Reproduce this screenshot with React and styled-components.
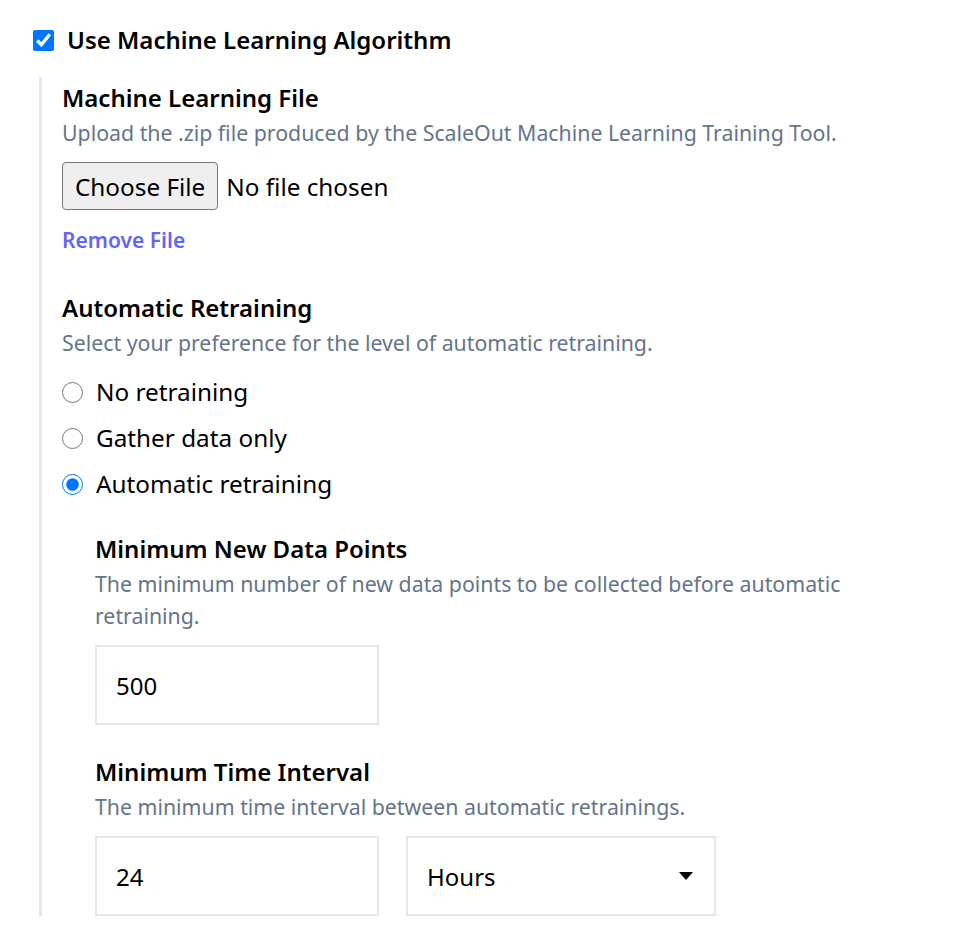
import React, { useState } from "react";
import styled, { createGlobalStyle } from "styled-components";

const GlobalStyle = createGlobalStyle`
  body {
    margin: 0;
    background: #ffffff;
    font-family: "Noto Sans", "Open Sans", sans-serif;
    color: #000000;
  }
`;

const retrainingOptions = [
  { value: "none", label: "No retraining" },
  { value: "gather", label: "Gather data only" },
  { value: "auto", label: "Automatic retraining" },
];

export default function App() {
  const [useMl, setUseMl] = useState(true);
  const [retraining, setRetraining] = useState("auto");
  const [points, setPoints] = useState("500");
  const [interval, setInterval] = useState("24");
  const [unit, setUnit] = useState("hours");

  return (
    <Page>
      <GlobalStyle />
      <CheckRow>
        <CheckBox
          type="checkbox"
          checked={useMl}
          onChange={(e) => setUseMl(e.target.checked)}
        />
        <CheckLabel>Use Machine Learning Algorithm</CheckLabel>
      </CheckRow>

      <Settings>
        <Title>Machine Learning File</Title>
        <Description>
          Upload the .zip file produced by the ScaleOut Machine Learning
          Training Tool.
        </Description>
        <FileInput type="file" accept=".zip" />
        <LinkButton type="button">Remove File</LinkButton>

        <Title $top={34}>Automatic Retraining</Title>
        <Description>
          Select your preference for the level of automatic retraining.
        </Description>
        <RadioGroup>
          {retrainingOptions.map((opt) => (
            <RadioRow key={opt.value}>
              <Radio
                type="radio"
                name="retraining"
                value={opt.value}
                checked={retraining === opt.value}
                onChange={() => setRetraining(opt.value)}
              />
              {opt.label}
            </RadioRow>
          ))}
        </RadioGroup>

        <Nested>
          <Title $top={29}>Minimum New Data Points</Title>
          <Description>
            The minimum number of new data points to be collected before
            automatic retraining.
          </Description>
          <FieldRow>
            <TextField
              value={points}
              onChange={(e) => setPoints(e.target.value)}
            />
          </FieldRow>

          <Title $top={29}>Minimum Time Interval</Title>
          <Description>
            The minimum time interval between automatic retrainings.
          </Description>
          <FieldRow>
            <TextField
              value={interval}
              onChange={(e) => setInterval(e.target.value)}
            />
            <SelectWrap>
              <Select value={unit} onChange={(e) => setUnit(e.target.value)}>
                <option value="minutes">Minutes</option>
                <option value="hours">Hours</option>
                <option value="days">Days</option>
              </Select>
            </SelectWrap>
          </FieldRow>
        </Nested>
      </Settings>
    </Page>
  );
}

const Page = styled.div`
  padding: 24px 0 36px 33px;
  width: 850px;
`;

const CheckRow = styled.label`
  display: flex;
  align-items: center;
  gap: 13px;
  height: 32px;
`;

const CheckBox = styled.input`
  width: 21px;
  height: 21px;
  margin: 0;
  accent-color: #0075ff;
`;

const CheckLabel = styled.span`
  font-size: 24px;
  font-weight: 600;
  line-height: 32px;
`;

const Settings = styled.div`
  margin: 21px 0 0 6px;
  padding: 3px 0 0 20px;
  border-left: 3px solid #e5e7eb;
  display: flex;
  flex-direction: column;
  align-items: flex-start;
`;

const Title = styled.h3`
  margin: ${(p) => p.$top || 0}px 0 0;
  font-size: 24px;
  font-weight: 600;
  line-height: 36px;
`;

const Description = styled.p`
  margin: 1px 0 0;
  font-size: 21.3px;
  line-height: 32px;
  color: #64748b;
`;

const FileInput = styled.input`
  margin-top: 13px;
  font-family: inherit;
  font-size: 24.3px;
  line-height: 32px;
  color: #000;

  &::file-selector-button {
    height: 48px;
    margin: 0 8px 0 0;
    padding: 0 12px;
    font-family: inherit;
    font-size: 24.3px;
    color: #000;
    background: #efefef;
    border: 1px solid #767676;
    border-radius: 4px;
  }
`;

const LinkButton = styled.button`
  margin-top: 14px;
  padding: 0;
  border: none;
  background: none;
  font-family: inherit;
  font-size: 21px;
  font-weight: 600;
  line-height: 32px;
  color: #6366f1;
  cursor: pointer;
`;

const RadioGroup = styled.div`
  margin-top: 15px;
  display: flex;
  flex-direction: column;
  gap: 10px;
`;

const RadioRow = styled.label`
  display: flex;
  align-items: center;
  gap: 13px;
  font-size: 24.3px;
  line-height: 36px;
`;

const Radio = styled.input`
  width: 21px;
  height: 21px;
  margin: 0;
  accent-color: #0075ff;
`;

const Nested = styled.div`
  margin-left: 33px;
  display: flex;
  flex-direction: column;
  align-items: flex-start;
`;

const FieldRow = styled.div`
  margin-top: 13px;
  display: flex;
  gap: 27px;
`;

const TextField = styled.input`
  box-sizing: border-box;
  width: 284px;
  height: 80px;
  padding: 0 19px;
  border: 2px solid #e5e7eb;
  border-radius: 0;
  font-family: inherit;
  font-size: 24px;
  color: #000;
  outline: none;
`;

const SelectWrap = styled.div`
  position: relative;

  &::after {
    content: "";
    position: absolute;
    right: 23px;
    top: 36px;
    border-left: 7px solid transparent;
    border-right: 7px solid transparent;
    border-top: 8px solid #000;
    pointer-events: none;
  }
`;

const Select = styled.select`
  box-sizing: border-box;
  width: 310px;
  height: 80px;
  padding: 0 19px;
  border: 2px solid #e5e7eb;
  border-radius: 0;
  background: #fff;
  appearance: none;
  font-family: inherit;
  font-size: 24px;
  color: #000;
  outline: none;
`;
